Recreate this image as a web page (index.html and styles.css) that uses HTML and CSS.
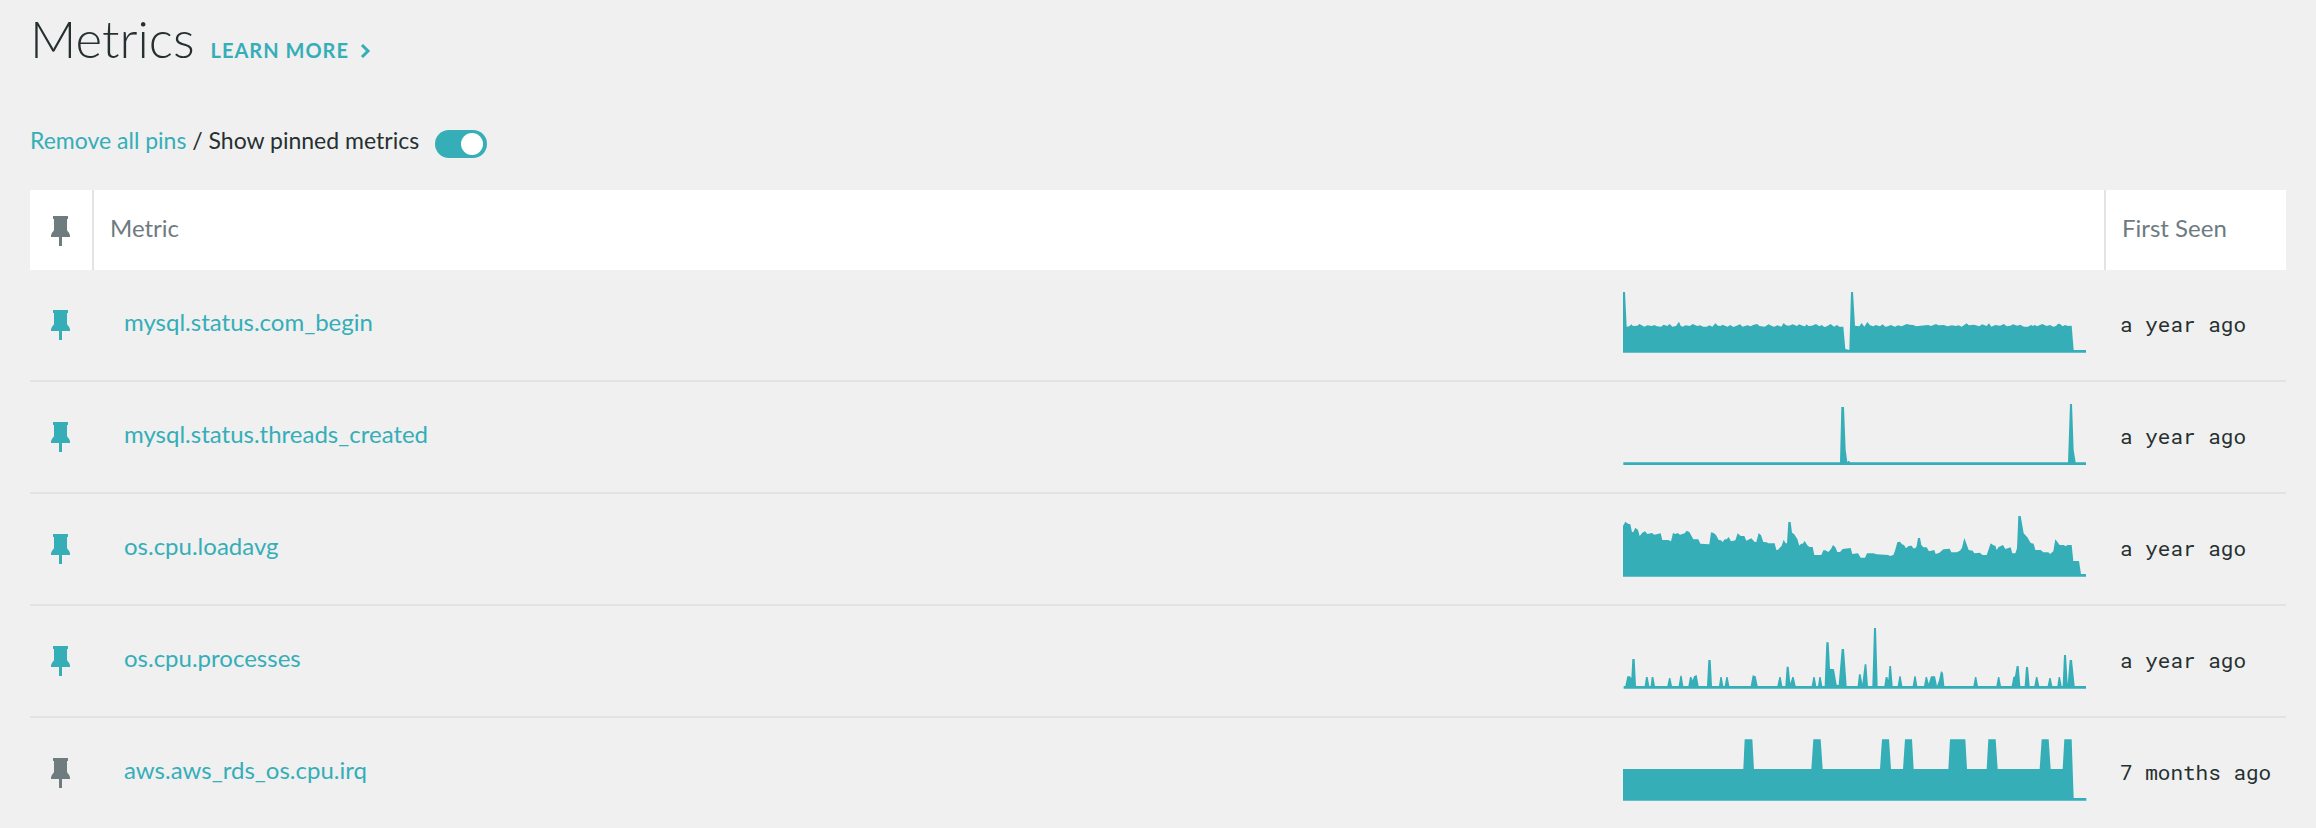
FILE: index.html
```html
<!DOCTYPE html>
<html lang="en">
<head>
<meta charset="utf-8">
<title>Metrics</title>
<link rel="stylesheet" href="styles.css">
</head>
<body>
<svg class="defs" aria-hidden="true">
  <symbol id="pin" viewBox="0 0 57 90"><path d="M6 0H51V9H48V42Q49 46 54 50L57 58V63H33V90H24V63H0V58L3 50Q8 46 9 42V9H6Z"/></symbol>
</svg>
<main class="page">
  <header class="title">
    <h1>Metrics</h1>
    <a class="learn" href="#">LEARN MORE
      <svg class="chevron" viewBox="0 0 9 14" aria-hidden="true"><path d="M1 1L7 7L1 13"/></svg>
    </a>
  </header>
  <div class="filters">
    <span><a href="#">Remove all pins</a> / <label for="pinned">Show pinned metrics</label></span>
    <input class="toggle" type="checkbox" role="switch" id="pinned" checked>
  </div>
  <table class="metrics">
    <thead>
      <tr>
        <th class="pin-col"><svg class="pin" role="img" aria-label="Pinned"><use href="#pin"/></svg></th>
        <th class="name-head" colspan="2">Metric</th>
        <th class="seen-head">First Seen</th>
      </tr>
    </thead>
    <tbody>
      <tr>
        <td class="pin-col"><button class="pin-button on" type="button" aria-label="Unpin metric"><svg class="pin"><use href="#pin"/></svg></button></td>
        <td class="name"><a href="#">mysql.status.com_begin</a></td>
        <td class="chart"><svg class="spark" viewBox="39 63 1392 186"><path d="M39 248V66H45L50 170L58 169L64 163L69 168L82 167L88 162L95 166L103 170L112 166L126 168L133 165L141 169L153 170L161 164L172 168L179 162L187 170L198 168L207 155L212 167L218 170L226 166L240 168L248 162L262 168L270 166L280 170L290 170L298 166L307 170L316 160L324 167L331 168L338 164L352 170L361 165L370 171L380 167L390 163L398 170L412 166L422 169L431 164L442 162L448 168L464 170L476 163L487 169L493 170L502 166L514 170L521 159L528 166L537 167L548 163L561 168L567 163L580 168L585 169L590 163L595 168L606 167L618 162L628 169L635 165L643 171L651 169L662 162L672 170L681 165L688 170H700L706 237L718 240L723 66H729L735 167L748 169L755 159L763 170L772 156L780 166L790 169L797 165L810 169L818 163L826 170L834 169L842 165L855 170L864 166L875 169L890 162L899 164L910 165L918 169L946 166L955 165L963 168L978 162L985 166L1002 165L1012 169L1026 166L1038 168L1046 166L1055 170L1070 160L1076 166L1092 164L1108 169L1116 163L1130 168L1137 160L1144 170L1156 165L1170 167L1182 162L1190 169L1201 167L1209 163L1222 167L1230 164L1242 170H1254L1263 165L1270 168L1274 164L1281 169L1297 162L1310 168L1320 165L1330 170L1338 168L1344 161L1350 162L1358 169L1365 165L1374 168L1385 167L1391 240H1428V248Z"/></svg></td>
        <td class="seen">a year ago</td>
      </tr>
      <tr>
        <td class="pin-col"><button class="pin-button on" type="button" aria-label="Unpin metric"><svg class="pin"><use href="#pin"/></svg></button></td>
        <td class="name"><a href="#">mysql.status.threads_created</a></td>
        <td class="chart"><svg class="spark" viewBox="39 39 1392 186"><path d="M40 225V217H690L694 51H702L707 180L712 216L716 212L721 217H1374L1380 42H1386L1391 180L1397 217H1428V225Z"/></svg></td>
        <td class="seen">a year ago</td>
      </tr>
      <tr>
        <td class="pin-col"><button class="pin-button on" type="button" aria-label="Unpin metric"><svg class="pin"><use href="#pin"/></svg></button></td>
        <td class="name"><a href="#">os.cpu.loadavg</a></td>
        <td class="chart"><svg class="spark" viewBox="39 45 1392 186"><path d="M39 230V78L46 65L54 71L61 73L66 96H70L76 83L84 90L89 108L97 98L105 94L112 102L126 99L133 104L152 100L157 120H175L183 124L189 99L196 102L203 99L210 104L224 100L230 92L238 96L250 118H265L271 131L298 133L303 97L311 99L318 105L326 120L333 121L338 126L344 118L350 118L356 111L363 124L376 121L383 100L392 108L403 108L409 122L424 115L434 126H439L446 99L453 106L460 126L470 127L475 130H494L499 150L504 149L515 137L521 119L527 130H531L535 66H542L546 98L552 102L562 117L568 137L573 131L578 131L584 123L592 136L598 141H608L613 165H634L640 151L646 151L655 156L663 147L669 135L676 142L682 156H690L698 147L722 144L727 162L744 160L752 173H765L771 160H790L800 163L835 165L840 168L850 165L855 152L862 127L870 125L876 133L882 135L888 145L896 138L905 137L910 145H916L920 138L924 114H930L934 135L940 142H950L957 154L973 150L977 162L988 158L1000 148L1019 146L1024 157H1040L1050 152L1056 143L1063 114L1076 150L1088 152L1093 160L1110 158L1117 165H1130L1134 154L1142 130L1150 136L1156 137L1160 150L1166 141L1179 135L1186 147L1202 142L1207 160L1216 160L1221 145L1225 48H1232L1241 100L1252 112L1262 129L1271 131L1276 150H1292L1300 157H1315L1320 162L1330 154L1336 118L1349 135H1362L1366 139L1373 135H1385L1390 183H1407L1413 222H1428V230Z"/></svg></td>
        <td class="seen">a year ago</td>
      </tr>
      <tr>
        <td class="pin-col"><button class="pin-button on" type="button" aria-label="Unpin metric"><svg class="pin"><use href="#pin"/></svg></button></td>
        <td class="name"><a href="#">os.cpu.processes</a></td>
        <td class="chart"><svg class="spark" viewBox="39 36 1392 186"><path d="M41 221V213H46L52 184H60L64 190L67 132H74L78 213H104L108 186H113L118 213H122L125 186H130L135 213H172L177 189H181L186 213H206L211 182H215L220 213H235L240 186H244L248 196L252 184L260 180L266 213H291L295 135H302L306 213H327L331 186H335L340 213H344L349 186H353L358 213H422L428 181L437 184L443 213H502L508 186H512L517 213H526L530 155H536L541 205L547 186H551L557 213H605L610 186H614L619 213H624L628 186H632L637 213H644L649 82H656L660 161L672 163L680 209L686 210L695 102H702L710 213H743L747 178H752L757 206L764 148H769L774 213H787L792 39H798L803 213H823L827 186H832L835 195L838 153H843L848 213H863L868 184H872L877 213H908L913 184H917L922 213H942L947 186H951L956 206L963 184H975L981 213L987 196L993 168L999 174L1003 213H1090L1095 186H1099L1104 213H1159L1164 186H1168L1173 213H1205L1210 186L1215 184L1220 153H1226L1231 213H1244L1248 156H1254L1259 213H1273L1278 186H1282L1288 213H1313L1318 189H1322L1327 213H1342L1346 186H1350L1355 213H1358L1362 120H1368L1373 208L1379 135H1386L1394 213H1428V221Z"/></svg></td>
        <td class="seen">a year ago</td>
      </tr>
      <tr>
        <td class="pin-col"><button class="pin-button" type="button" aria-label="Pin metric"><svg class="pin"><use href="#pin"/></svg></button></td>
        <td class="name"><a href="#">aws.aws_rds_os.cpu.irq</a></td>
        <td class="chart"><svg class="spark" viewBox="39 42 1392 186"><path d="M39 227V132H400L404 43H427L432 132H604L610 43H632L638 132H810L816 43H837L843 132H879L885 43H906L911 132H1015L1020 43H1066L1071 132H1130L1135 43H1157L1163 132H1289L1295 43H1316L1322 132H1358L1363 43H1385L1391 219H1429V227Z"/></svg></td>
        <td class="seen">7 months ago</td>
      </tr>
    </tbody>
  </table>
</main>
</body>
</html>
```
FILE: styles.css
```css
* { box-sizing: border-box; }

body {
  margin: 0;
  background: #f0f0f0;
  color: #263030;
  font-family: Lato, "Open Sans", sans-serif;
  font-size: 23px;
  overflow-x: hidden;
}

a { color: #35aeb8; text-decoration: none; }

.defs { display: none; }

.page { padding: 7px 30px 0; }

.title {
  display: flex;
  align-items: baseline;
  gap: 16px;
  height: 112px;
}

h1 {
  margin: 0;
  font-size: 51px;
  font-weight: 300;
  line-height: 64px;
}

.learn {
  font-size: 20px;
  font-weight: 700;
  letter-spacing: 1px;
}

.chevron {
  width: 9px;
  height: 14px;
  margin-left: 6px;
  fill: none;
  stroke: currentColor;
  stroke-width: 3;
  overflow: visible;
  vertical-align: baseline;
}

.filters {
  display: flex;
  align-items: flex-start;
  gap: 16px;
  height: 71px;
  padding-top: 5px;
  line-height: 32px;
}

.toggle {
  appearance: none;
  width: 52px;
  height: 28px;
  margin: 6px 0 0;
  padding: 3px 4px;
  border-radius: 14px;
  background: #a5adae;
  display: flex;
  align-items: center;
}

.toggle::before {
  content: "";
  width: 22px;
  height: 22px;
  border-radius: 50%;
  background: #fff;
}

.toggle:checked {
  justify-content: flex-end;
  background: #35aeb8;
}

.metrics {
  width: 100%;
  border-spacing: 0;
  font-size: 24px;
  line-height: 32px;
}

th, td { padding: 0; text-align: left; vertical-align: top; }

th {
  height: 80px;
  padding-top: 22px;
  background: #fff;
  color: #6e7b7f;
  font-weight: 400;
}

th + th {
  border-left: 2px solid #e3e3e3;
  padding-left: 16px;
}

td { height: 112px; border-bottom: 2px solid #e3e3e3; }

.pin-col { width: 62px; padding-right: 1px; text-align: center; }
th.pin-col { padding-top: 26px; }
td.pin-col { padding-top: 40px; }

.pin { display: block; width: 19px; height: 30px; margin: 0 auto; fill: currentColor; }

.pin-button {
  display: block;
  margin: 0 auto;
  padding: 0;
  border: 0;
  background: none;
  color: #6e7b7f;
}

.pin-button.on { color: #35aeb8; }

.name { padding: 36px 0 0 32px; }

.chart { width: 481px; padding-top: 21px; }

.spark { display: block; width: 464px; height: 62px; fill: #35aeb8; }

.seen-head { width: 182px; }

.seen {
  padding: 38px 0 0 16px;
  font-family: "Roboto Mono", "DejaVu Sans Mono", monospace;
  font-size: 21px;
  line-height: 32px;
  white-space: nowrap;
}
```
